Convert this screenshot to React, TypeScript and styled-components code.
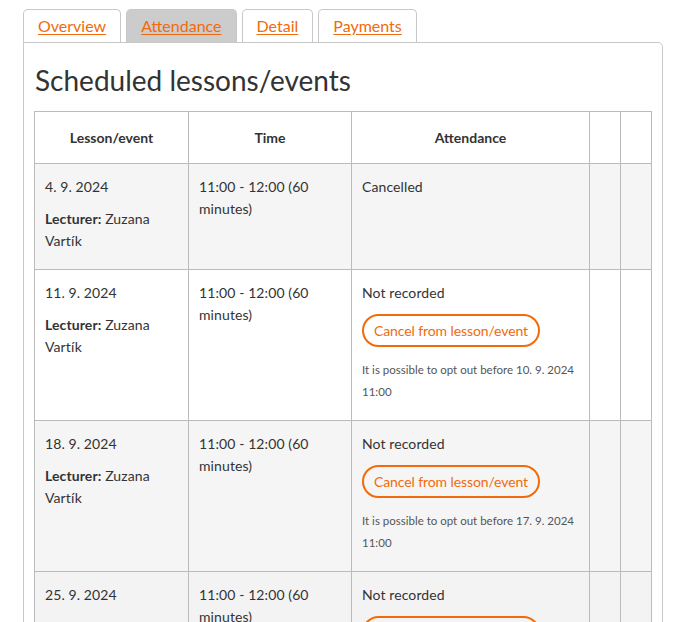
import React from "react";
import styled, { createGlobalStyle } from "styled-components";

const Global = createGlobalStyle`
  html, body { margin: 0; padding: 0; background: #fff; }
  body { font-family: "Lato", "Liberation Sans", sans-serif; color: #333; }
`;

const Page = styled.div`
  padding: 9px 23px 0 23px;
  width: 640px;
`;

const Tabs = styled.div`
  display: flex;
  gap: 5px;
  height: 33px;
`;

const Tab = styled.a<{ $active?: boolean }>`
  display: flex;
  align-items: center;
  justify-content: center;
  padding: 0 14px 2px 14px;
  border: 1px solid #c8c8c8;
  border-bottom: none;
  border-radius: 5px 5px 0 0;
  background: ${(p) => (p.$active ? "#cccccc" : "#fff")};
  color: #f26a0a;
  font-size: 16px;
  text-decoration: underline;
  text-underline-offset: 2px;
  cursor: pointer;
`;

const Panel = styled.div`
  border: 1px solid #c8c8c8;
  border-radius: 0 5px 0 0;
  padding: 10px 10px 0 10px;
  min-height: 600px;
`;

const Heading = styled.h2`
  margin: 12px 0 15px 1px;
  font-size: 28px;
  font-weight: 400;
  line-height: 31px;
  color: #333;
`;

const Table = styled.table`
  width: 617px;
  border-collapse: collapse;
  table-layout: fixed;
  font-size: 14px;
`;

const Th = styled.th`
  border: 1px solid #bbb;
  height: 51px;
  padding: 0 10px;
  font-weight: 700;
  font-size: 14px;
  text-align: center;
  color: #333;
`;

const Row = styled.tr<{ $bg: string }>`
  background: ${(p) => p.$bg};
`;

const Td = styled.td`
  border: 1px solid #bbb;
  padding: 12px 10px 17px 10px;
  vertical-align: top;
  line-height: 22px;
  color: #333;
  letter-spacing: 0.1px;
`;

const Line = styled.div<{ $gap?: number }>`
  margin-bottom: ${(p) => p.$gap ?? 0}px;
`;

const CancelButton = styled.button`
  display: inline-flex;
  align-items: center;
  height: 33px;
  padding: 0 10px;
  border: 2px solid #f26a0a;
  border-radius: 17px;
  background: transparent;
  color: #f26a0a;
  font-family: inherit;
  font-size: 14px;
  letter-spacing: -0.1px;
  margin: 10px 0 12px 0;
  cursor: pointer;
`;

const Note = styled.div`
  font-size: 11.5px;
  line-height: 22px;
  color: #555;
  letter-spacing: 0;
`;

type Lesson = {
  date: string;
  bg: string;
  status: string;
  deadline?: string;
};

const lessons: Lesson[] = [
  { date: "4. 9. 2024", bg: "#f5f5f5", status: "Cancelled" },
  { date: "11. 9. 2024", bg: "#ffffff", status: "Not recorded", deadline: "10. 9. 2024 11:00" },
  { date: "18. 9. 2024", bg: "#f5f5f5", status: "Not recorded", deadline: "17. 9. 2024 11:00" },
  { date: "25. 9. 2024", bg: "#f3f3f3", status: "Not recorded", deadline: "24. 9. 2024 11:00" },
];

export default function App() {
  return (
    <>
      <Global />
      <Page>
        <Tabs>
          <Tab>Overview</Tab>
          <Tab $active>Attendance</Tab>
          <Tab>Detail</Tab>
          <Tab>Payments</Tab>
        </Tabs>
        <Panel>
          <Heading>Scheduled lessons/events</Heading>
          <Table>
            <colgroup>
              <col style={{ width: 154 }} />
              <col style={{ width: 163 }} />
              <col style={{ width: 238 }} />
              <col style={{ width: 31 }} />
              <col style={{ width: 31 }} />
            </colgroup>
            <thead>
              <tr>
                <Th>Lesson/event</Th>
                <Th>Time</Th>
                <Th>Attendance</Th>
                <Th />
                <Th />
              </tr>
            </thead>
            <tbody>
              {lessons.map((l) => (
                <Row key={l.date} $bg={l.bg}>
                  <Td>
                    <Line $gap={10}>{l.date}</Line>
                    <Line>
                      <b>Lecturer:</b> Zuzana Vartík
                    </Line>
                  </Td>
                  <Td>11:00 - 12:00 (60 minutes)</Td>
                  <Td>
                    <Line>{l.status}</Line>
                    {l.deadline && (
                      <>
                        <CancelButton>Cancel from lesson/event</CancelButton>
                        <Note>It is possible to opt out before {l.deadline}</Note>
                      </>
                    )}
                  </Td>
                  <Td />
                  <Td />
                </Row>
              ))}
            </tbody>
          </Table>
        </Panel>
      </Page>
    </>
  );
}
